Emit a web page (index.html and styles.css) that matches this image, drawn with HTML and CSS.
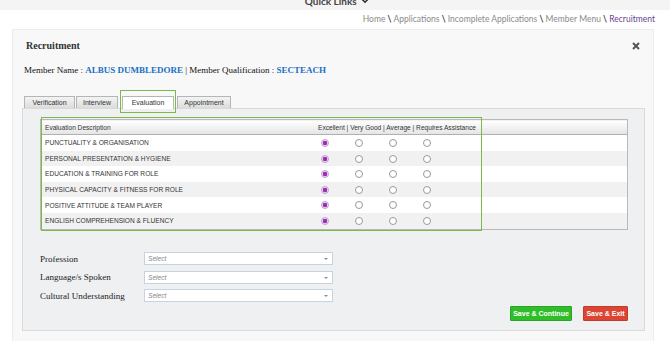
FILE: index.html
```html
<!DOCTYPE html>
<html lang="en">
  <head>
    <meta charset="UTF-8" />
    <title>Recruitment</title>
    <link rel="stylesheet" href="styles.css">
  </head>
  <body>
    <div class="topbar">
      <div class="quick">Quick Links
        <svg width="8" height="6" viewBox="0 0 8 6"><path d="M1 1.2 L4 4.2 L7 1.2" fill="none" stroke="#333" stroke-width="1.6"/></svg>
      </div>
    </div>
    <div class="crumbs">
      Home <b>\</b> Applications <b>\</b> Incomplete Applications <b>\</b> Member Menu <b>\</b> <span class="current">Recruitment</span>
    </div>

    <div class="panel">
      <div class="panel-head">
        <h2>Recruitment</h2>
        <svg class="close" width="8" height="8" viewBox="0 0 8 8"><path d="M1 1 L7 7 M7 1 L1 7" stroke="#555" stroke-width="2"/></svg>
      </div>
      <p class="member">Member Name : <b>ALBUS DUMBLEDORE</b> | Member Qualification : <b>SECTEACH</b></p>

      <div class="tabs">
        <span class="tab t1">Verification</span>
        <span class="tab t2">Interview</span>
        <span class="tab t3 active">Evaluation</span>
        <span class="tab t4">Appointment</span>
        <div class="hl hl-tab"></div>
      </div>

      <div class="tab-body">
        <div class="eval-wrap">
          <table class="eval">
            <thead>
              <tr>
                <th class="desc">Evaluation Description</th>
                <th class="rate">Excellent | Very Good | Average | Requires Assistance</th>
                <th></th>
              </tr>
            </thead>
            <tbody>
              <tr><td>PUNCTUALITY &amp; ORGANISATION</td><td class="rate"><i class="radio on"></i><i class="radio"></i><i class="radio"></i><i class="radio"></i></td><td></td></tr>
              <tr><td>PERSONAL PRESENTATION &amp; HYGIENE</td><td class="rate"><i class="radio on"></i><i class="radio"></i><i class="radio"></i><i class="radio"></i></td><td></td></tr>
              <tr><td>EDUCATION &amp; TRAINING FOR ROLE</td><td class="rate"><i class="radio on"></i><i class="radio"></i><i class="radio"></i><i class="radio"></i></td><td></td></tr>
              <tr><td>PHYSICAL CAPACITY &amp; FITNESS FOR ROLE</td><td class="rate"><i class="radio on"></i><i class="radio"></i><i class="radio"></i><i class="radio"></i></td><td></td></tr>
              <tr><td>POSITIVE ATTITUDE &amp; TEAM PLAYER</td><td class="rate"><i class="radio on"></i><i class="radio"></i><i class="radio"></i><i class="radio"></i></td><td></td></tr>
              <tr><td>ENGLISH COMPREHENSION &amp; FLUENCY</td><td class="rate"><i class="radio on"></i><i class="radio"></i><i class="radio"></i><i class="radio"></i></td><td></td></tr>
            </tbody>
          </table>
          <div class="hl hl-table"></div>
        </div>

        <div class="form">
          <div class="form-row">
            <label>Profession</label>
            <div class="select">Select<span class="arrow"></span></div>
          </div>
          <div class="form-row">
            <label>Language/s Spoken</label>
            <div class="select">Select<span class="arrow"></span></div>
          </div>
          <div class="form-row">
            <label>Cultural Understanding</label>
            <div class="select">Select<span class="arrow"></span></div>
          </div>
        </div>

        <div class="actions">
          <button class="btn btn-green">Save &amp; Continue</button>
          <button class="btn btn-red">Save &amp; Exit</button>
        </div>
      </div>
    </div>
  </body>
</html>
```

FILE: styles.css
```css
html,
body {
  margin: 0;
  padding: 0;
  background: #fff;
}
body {
  font-family: "Liberation Sans", Arial, sans-serif;
  color: #333;
}

.topbar {
  height: 10px;
  background: #f4f4f4;
  overflow: hidden;
  text-align: center;
}
.quick {
  margin-top: -5px;
  line-height: 12px;
  font-family: Lato, "Open Sans", sans-serif;
  font-size: 10px;
  font-weight: bold;
  color: #444;
  padding-left: 4px;
  svg {
    vertical-align: 1px;
    margin-left: 2px;
  }
}

.crumbs {
  margin-top: 4px;
  padding-right: 15px;
  text-align: right;
  line-height: 10px;
  font-family: Lato, "Open Sans", sans-serif;
  font-size: 8.5px;
  color: #8a8a8a;
  b {
    color: #333;
  }
  .current {
    color: #6b3f94;
  }
}

.panel {
  margin: 5px 16px 0 12px;
  padding: 9px 0 20px 0;
  background: #f8f8f8;
  border: 1px solid #ececec;
  font-family: "Liberation Serif", "Times New Roman", serif;
}
.panel-head {
  display: flex;
  align-items: center;
  justify-content: space-between;
  padding: 0 13px 0 13px;
  h2 {
    margin: 0;
    font-size: 10px;
    line-height: 14px;
    color: #333;
  }
  .close {
    display: block;
  }
}
.member {
  margin: 10px 0 0 11px;
  font-size: 9px;
  line-height: 14px;
  color: #111;
  b {
    color: #1a6fc6;
  }
}

.tabs {
  position: relative;
  display: flex;
  margin: 19px 0 0 10px;
  padding-left: 1px;
}
.tab {
  box-sizing: border-box;
  height: 12px;
  line-height: 11px;
  text-align: center;
  font-family: "Liberation Sans", Arial, sans-serif;
  font-size: 7px;
  color: #333;
  border: 1px solid #b5b5b5;
  border-bottom: none;
  background: linear-gradient(#f4f4f4, #dcdcdc);
}
.t1 {
  width: 51px;
}
.t2 {
  width: 42px;
  margin-left: 1px;
}
.t3 {
  width: 52px;
  margin-left: 4px;
}
.t4 {
  width: 54px;
  margin-left: 3px;
}
.tab.active {
  background: #fff;
  position: relative;
  z-index: 1;
  height: 13px;
  margin-bottom: -1px;
}
.hl {
  position: absolute;
  border: 1.5px solid #7cb84c;
  box-sizing: border-box;
  z-index: 2;
}
.hl-tab {
  left: 97px;
  top: -6px;
  width: 56px;
  height: 23px;
}

.tab-body {
  margin: 0 8px 0 9px;
  padding: 10px 16px 9px 17px;
  background: #eff0f2;
  border: 1px solid #dadada;
}

.eval-wrap {
  position: relative;
}
.eval {
  width: 100%;
  border-collapse: collapse;
  border: 1px solid #b9b9b9;
  font-family: "Liberation Sans", Arial, sans-serif;
  font-size: 6.6px;
  color: #333;
  th {
    height: 14px;
    padding: 0 0 0 4px;
    text-align: left;
    font-weight: normal;
    background: linear-gradient(#fff, #e4e4e4);
    border-bottom: 1px solid #b0b0b0;
  }
  th.desc {
    width: 273px;
  }
  th.rate {
    width: 158px;
    padding-left: 0;
  }
  td {
    height: 15.6px;
    padding: 0 0 0 4px;
    white-space: nowrap;
  }
  td.rate {
    padding-left: 3px;
  }
  tbody tr:nth-child(even) {
    background: #f1f1f1;
  }
  tbody tr:nth-child(odd) {
    background: #fff;
  }
}
.radio {
  display: inline-block;
  box-sizing: border-box;
  width: 8px;
  height: 8px;
  margin-right: 26px;
  vertical-align: middle;
  border: 1px solid #9a9a9a;
  border-radius: 50%;
  background: #fff;
}
.radio.on {
  border-color: #c8a0d8;
  background: radial-gradient(circle, #9a2fb0 0 2px, #e8d4ee 2.5px);
}
.hl-table {
  left: 1px;
  top: -2px;
  width: 441px;
  height: 114px;
}

.form {
  margin-top: 20px;
}
.form-row {
  display: flex;
  align-items: center;
  height: 18.5px;
  label {
    width: 104px;
    font-size: 9px;
    color: #222;
  }
}
.select {
  position: relative;
  box-sizing: border-box;
  width: 189px;
  height: 13px;
  padding-left: 3px;
  line-height: 11px;
  background: #fff;
  border: 1px solid #c6d3e3;
  font-family: "Liberation Sans", Arial, sans-serif;
  font-style: italic;
  font-size: 6.6px;
  color: #888;
  .arrow {
    position: absolute;
    right: 4px;
    top: 5px;
    border-left: 2px solid transparent;
    border-right: 2px solid transparent;
    border-top: 2.5px solid #8a8aa0;
  }
}

.actions {
  display: flex;
  justify-content: flex-end;
  gap: 11px;
  margin-top: 1px;
}
.btn {
  height: 15px;
  padding: 0;
  border: 1px solid transparent;
  border-radius: 1px;
  font-family: "Liberation Sans", Arial, sans-serif;
  font-size: 7px;
  font-weight: bold;
  color: #fff;
}
.btn-green {
  width: 62px;
  background: #2fbe2a;
  border-color: #29a526;
}
.btn-red {
  width: 45px;
  background: #dc4534;
  border-color: #c63a2c;
}
```
